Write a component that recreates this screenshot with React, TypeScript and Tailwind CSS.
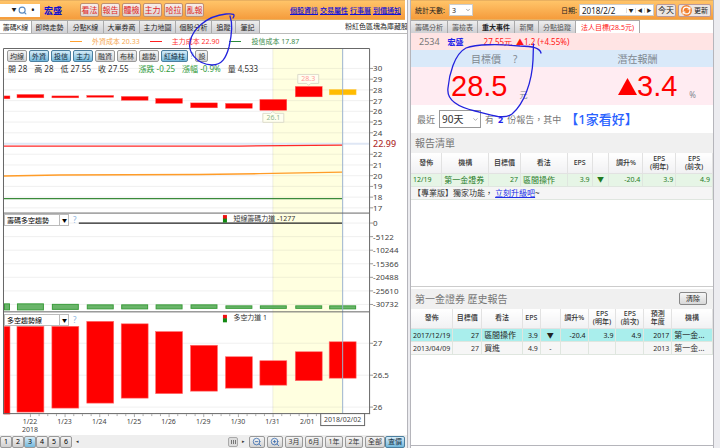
import { useState } from "react";
import type { ReactNode } from "react";
import { ChevronDown, RefreshCw, Search, ZoomIn, ZoomOut } from "lucide-react";
import clsx from "clsx";

const actions = ["看法", "報告", "體檢", "主力", "哈拉", "亂報"];
const links = ["個股資訊", "交易屬性", "行事曆", "到價通知"];
const leftTabs = ["籌碼K線", "即時走勢", "分點K線", "大單券商", "主力地圖", "個股分析", "追蹤", "筆記"];
const rightTabs = ["籌碼分析", "籌檢表", "重大事件", "新聞", "分點追蹤", "法人目標(28.5元)"];

const overlays = [
  { label: "均線", on: false },
  { label: "外資", on: true },
  { label: "投信", on: true },
  { label: "主力", on: true },
  { label: "融資", on: false },
  { label: "布林", on: false },
  { label: "趨勢", on: false },
  { label: "紅綠柱", on: true },
];

const legend = [
  { label: "外資成本 20.33", line: "bg-[#ffa030]", text: "text-[#f5a850]" },
  { label: "主力成本 22.90", line: "bg-[#ff2020]", text: "text-[#ff3030]" },
  { label: "投信成本 17.87", line: "bg-[#2a8a3a]", text: "text-[#3a8a4a]" },
];

// x, width, candle top/bottom, volume top/bottom, trend top/bottom
const bars = [
  [4, 6, 96, 99, 304, 311, 327, 415],
  [17, 27, 94.5, 98, 304, 311, 327, 413],
  [52, 27, 96, 98, 304.5, 310.5, 327, 409],
  [87, 27, 95.5, 97.5, 305, 310, 322, 404],
  [121.5, 27, 96.5, 100.5, 305, 310, 324.5, 399],
  [156, 27, 98.5, 103.5, 305, 310, 332.3, 394.5],
  [191, 27, 103, 108, 305, 309.5, 346, 392],
  [226, 27, 103.5, 108.5, 306, 309.5, 357.5, 389],
  [260.5, 27, 99.5, 110.5, 306, 309.5, 361.5, 386],
  [296, 27, 86.5, 97, 306, 309.5, 352.5, 381.5],
  [330, 27, 89.5, 95, 306, 310, 342.5, 379],
];

const priceTicks = [30, 29, 28, 27, 26, 25, 24, 22, 21, 20, 19, 18, 17].map((v) => ({
  label: String(v),
  y: 68.5 + (30 - v) * 10.75,
}));
const volumeTicks = ["0", "-5122", "-10244", "-15366", "-20488", "-25610", "-30732"].map((label, i) => ({
  label,
  y: 223.5 + i * 13.6,
}));
const trendTicks = [
  { label: "27", y: 344 },
  { label: "26.5", y: 376 },
  { label: "26", y: 408 },
];
const ticks = [...priceTicks, ...volumeTicks, ...trendTicks];

const dates = ["1/22", "1/23", "1/24", "1/25", "1/26", "1/29", "1/30", "1/31", "2/01"];

const history = [
  ["2017/12/19", "27", "區間操作", "3.9", "▼", "-20.4", "3.9", "4.9", "2017", "第一金…"],
  ["2013/04/09", "27", "買進", "4.9", "-", "", "", "", "2013", "第一金…"],
];

const SmallButton = ({ children, on, label }: { children: ReactNode; on?: boolean; label?: string }) => (
  <button
    type="button"
    aria-label={label}
    className={clsx(
      "flex h-3 items-center justify-center rounded-xs border px-0.5 text-[7px] leading-none whitespace-nowrap",
      on
        ? "border-[#4c7f9f] bg-linear-to-b from-[#d5ecf8] to-[#72b8dc] text-[#102a3a]"
        : "border-[#999] bg-linear-to-b from-[#f6f6f6] to-[#d2d2d2] text-[#333]"
    )}
  >
    {children}
  </button>
);

const Tab = ({ label, active, className }: { label: string; active?: boolean; className?: string }) => (
  <button
    type="button"
    className={clsx(
      "h-[13px] border-t border-r border-[#aaa] text-[7px] leading-none whitespace-nowrap",
      active ? "bg-white" : "bg-linear-to-b from-[#eeeeee] to-[#cfcfd3]",
      className
    )}
  >
    {label}
  </button>
);

const Chart = () => (
  <svg viewBox="0 48 408 387" className="block w-full" fontSize="7" fill="#444">
    <rect x="273.5" y="48" width="70" height="366" fill="#ffffe0" />
    {ticks.map((t) => (
      <g key={t.label}>
        <path d={`M4 ${t.y}H370`} stroke="#888" strokeOpacity="0.13" />
        <path d={`M371 ${t.y}h3`} stroke="#999" />
        <text x="374" y={t.y + 3} fontSize="8">{t.label}</text>
      </g>
    ))}
    <path d="M4 144H370" stroke="#dfe7f5" strokeWidth="2" />
    <text x="374" y="147" fontSize="9" fontWeight="500" fill="#b03030">22.99</text>
    <path d="M273.5 48V414" stroke="#888" strokeOpacity="0.15" />

    {bars.map(([x, w, top, bottom, vTop, vBottom, tTop, tBottom], i) => (
      <g key={x}>
        <rect x={x} y={top} width={w} height={bottom - top} fill={i === 10 ? "#ffbc00" : "#ff0000"} stroke={i === 10 ? "#ffcf60" : "#ff7070"} strokeWidth="0.4" />
        <rect x={x + 0.5} y={vTop + 0.5} width={w - 1} height={vBottom - vTop - 1} fill="#6ab56a" stroke="#3a9c3a" />
        <rect x={x} y={tTop} width={w} height={tBottom - tTop} fill="#ff0000" stroke="#ff7070" strokeWidth="0.6" />
      </g>
    ))}

    <path d="M4 146.3H240L343 145.3" stroke="#ff2828" strokeWidth="1.3" fill="none" />
    <path d="M4 176.3L60 175.3L200 174.8L260 174L343 172.5" stroke="#ff9c28" strokeWidth="1.3" fill="none" />
    <path d="M4 199H343" stroke="#3a8a3a" strokeWidth="1.3" />
    <path d="M79 223.5H343" stroke="#222" strokeWidth="1.2" />
    <path d="M343.5 49V414" stroke="#9db3cf" />

    <path d="M298.5 74.5h21v9h-8l-2 2-2-2h-9z" fill="#fffef0" stroke="#dddccb" />
    <text x="309" y="81.5" textAnchor="middle" fill="#ff9a9a">28.3</text>
    <path d="M263.5 113.5h8l2-2 2 2h9v9h-21z" fill="#fffff0" stroke="#dddccb" />
    <text x="274" y="120.5" textAnchor="middle" fill="#8fb88f">26.1</text>

    <path d="M3.5 415V48.5H370.5V415M3 213.5H370M3 312.5H370M3 414.5H371" stroke="#666" fill="none" />
    {dates.map((d, i) => (
      <g key={d}>
        <path d={`M${30.5 + i * 34.75} 415v3m8.7 -3v2m8.7 -2v2m8.7 -2v2`} stroke="#aaa" fill="none" />
        <text x={30 + i * 34.75} y="424.5" textAnchor="middle">{d}</text>
      </g>
    ))}
    <text x="30" y="432.5" textAnchor="middle">2018</text>
    <rect x="321.5" y="414.5" width="44" height="12" fill="#fff" stroke="#666" />
    <text x="343.5" y="423" textAnchor="middle">2018/02/02</text>

    {[215, 315].map((y) => (
      <g key={y}>
        <rect x="223.5" y={y + 0.5} width="4" height="4" fill="#ee1111" />
        <rect x="223.5" y={y + 4} width="4" height="4" fill="#118811" />
      </g>
    ))}
    <text x="234" y="221" fill="#333">短線籌碼力道 -1277</text>
    <text x="234" y="321" fill="#333">多空力道 1</text>
  </svg>
);

const SeriesSelect = ({ label, className }: { label: string; className: string }) => (
  <div className={clsx("absolute left-1 flex items-center gap-1 text-[7px] leading-none", className)}>
    <div className="relative">
      <select aria-label={label} className="block h-3 w-[65px] appearance-none border border-[#bbb] bg-white pl-0.5">
        <option>{label}</option>
      </select>
      <span className="pointer-events-none absolute inset-y-0 right-0 flex w-2.5 items-center justify-center border-l border-[#bbb] text-[5px]">▼</span>
    </div>
    <span className="text-[8px] text-[#8ab4e0]">?</span>
  </div>
);

const LeftPanel = () => (
  <section className="flex min-w-0 flex-col border-r border-[#b5b5bb] bg-white">
    <header className="mr-0.5 flex h-5 items-center border-y border-[#e9b060] bg-linear-to-b from-[#ffc468] to-[#f59c3c]">
      <div className="flex h-[13px] w-10 items-center bg-white text-[#222]">
        <input aria-label="股票代號" className="h-full w-2.5 min-w-0" />
        <span className="w-2 text-center text-[5px]">▼</span>
        <button type="button" aria-label="搜尋" className="text-[#5a8ac0]">
          <Search size={9} strokeWidth={3} />
        </button>
        <span className="ml-1 text-[10px] leading-none">•</span>
      </div>
      <strong className="ml-1 text-[9px] leading-none text-[#1010d0]">宏盛</strong>
      <div className="ml-[18px] flex gap-0.5">
        {actions.map((a) => (
          <button key={a} type="button" className="h-3.5 w-[19px] rounded-xs border border-[#c09070] bg-linear-to-b from-[#f8eeea] to-[#dcd2d0] text-[8px] leading-none whitespace-nowrap text-[#e02828]">
            {a}
          </button>
        ))}
      </div>
      <nav className="mr-1 ml-auto flex gap-0.5 text-[7px] leading-none font-medium whitespace-nowrap text-[#1010d8] underline">
        {links.map((l) => (
          <a key={l} href="#">{l}</a>
        ))}
      </nav>
    </header>

    <div className="flex h-3.5 items-end overflow-hidden border-b border-[#bbb] text-[#222]">
      {leftTabs.map((t, i) => (
        <Tab key={t} label={t} active={i === 0} className={i === 0 ? "w-8" : i < 6 ? "w-9" : "w-6"} />
      ))}
      <span className="ml-auto w-[62px] overflow-hidden pb-0.5 text-[7px] leading-[9px] whitespace-nowrap">粉紅色區塊為庫藏股</span>
    </div>

    <div className="flex h-3.5 items-center gap-2.5 pl-[70px] text-[7px] leading-none">
      {legend.map((l) => (
        <span key={l.label} className="flex items-center gap-2.5">
          <i className={clsx("h-px w-3", l.line)} />
          <span className={l.text}>{l.label}</span>
        </span>
      ))}
    </div>

    <div className="relative">
      <Chart />
      <div className="absolute top-0.5 left-[7px] flex gap-0.5">
        {overlays.map((o) => (
          <SmallButton key={o.label} on={o.on}>{o.label}</SmallButton>
        ))}
        <span className="text-[8px] leading-3 text-[#8ab4e0]">?</span>
        <SmallButton>設</SmallButton>
      </div>
      <div className="absolute top-[15px] left-2 flex gap-2.5 text-[8px] leading-3 whitespace-nowrap text-[#333]">
        <div className="flex gap-[7px]">
          <span>開 28</span>
          <span>高 28</span>
          <span>低 27.55</span>
          <span>收 27.55</span>
        </div>
        <div className="flex gap-[7px]">
          <span className="text-[#2f9a3a]">漲跌 -0.25</span>
          <span className="text-[#2f9a3a]">漲幅 -0.9%</span>
          <span>量 4,533</span>
        </div>
      </div>
      <SeriesSelect label="籌碼多空趨勢" className="top-[43%]" />
      <SeriesSelect label="多空趨勢線" className="top-[69%]" />
    </div>

    <footer className="mt-auto flex h-[13px] items-center gap-0.5 bg-[#eee] pr-1">
      <div className="flex">
        {["1", "2", "3", "4", "5", "6"].map((n) => (
          <button
            key={n}
            type="button"
            className={clsx(
              "h-3 w-3 rounded-xs border border-[#999] text-[7px] leading-none",
              n === "3" ? "bg-linear-to-b from-[#d5ecf8] to-[#72b8dc]" : "bg-linear-to-b from-[#f4f4f4] to-[#d0d0d0]"
            )}
          >
            {n}
          </button>
        ))}
      </div>
      <div className="flex flex-1 items-center justify-between px-0.5 text-[5px] text-[#333]">
        <span>◂</span>
        <span className="flex items-center gap-1">
          <span className="flex h-2.5 w-2.5 items-center justify-center gap-px rounded-xs border border-[#aaa] bg-[#ddd]">
            <i className="h-1 w-px bg-[#777]" />
            <i className="h-1 w-px bg-[#777]" />
            <i className="h-1 w-px bg-[#777]" />
          </span>
          <span>▸</span>
        </span>
      </div>
      <SmallButton label="縮小"><ZoomOut size={10} className="text-[#3f6fb0]" /></SmallButton>
      <SmallButton label="放大"><ZoomIn size={10} className="text-[#3f6fb0]" /></SmallButton>
      {["3月", "6月", "1年", "2年", "全部", "查價"].map((r) => (
        <div key={r} className="grid w-[18px]">
          <SmallButton on={r === "查價"}>{r}</SmallButton>
        </div>
      ))}
    </footer>
  </section>
);

const head = "border-r border-b border-[#e2e2e2] bg-linear-to-b from-white to-[#f1f1f3] text-[7px] leading-[8px] font-medium text-[#333]";
const cell = "overflow-hidden border-r border-b border-[#dfe6df] px-0.5 text-[7px] leading-none whitespace-nowrap";

const ReportTable = () => (
  <table className="w-full table-fixed border-collapse">
    <colgroup>
      {[31, 47, 32, 47, 25, 17, 34, 33, 37].map((w, i) => (
        <col key={i} style={{ width: `${w / 3.03}%` }} />
      ))}
    </colgroup>
    <thead>
      <tr className="h-5">
        {["發佈", "機構", "目標價", "看法", "EPS", "", "調升%"].map((h, i) => (
          <th key={i} className={head}>{h}</th>
        ))}
        <th className={head}>EPS<br />(明年)</th>
        <th className={head}>EPS<br />(前次)</th>
      </tr>
    </thead>
    <tbody>
      <tr className="h-[13px] bg-[#e6f5e6] text-[#1f7a1f]">
        <td className={cell}>12/19</td>
        <td className={cell}><span className="text-[8px]">第一金證券</span></td>
        <td className={clsx(cell, "text-right")}>27</td>
        <td className={cell}><span className="text-[8px]">區間操作</span></td>
        <td className={clsx(cell, "text-right")}>3.9</td>
        <td className={clsx(cell, "text-center")}>▼</td>
        <td className={clsx(cell, "text-right")}>-20.4</td>
        <td className={clsx(cell, "text-right")}>3.9</td>
        <td className={clsx(cell, "text-right")}>4.9</td>
      </tr>
      <tr className="h-[13px] bg-[#f5f5f5] text-[#333]">
        <td colSpan={9} className={cell}>
          <span className="text-[8px]">
            【專業版】獨家功能， <a href="#" className="text-[#2030e8] underline">立刻升級吧</a>~
          </span>
        </td>
      </tr>
    </tbody>
  </table>
);

const HistoryTable = () => (
  <table className="w-full table-fixed border-collapse text-[#333]">
    <colgroup>
      {[42, 29, 41, 18, 20, 28, 28, 28, 28, 41].map((w, i) => (
        <col key={i} style={{ width: `${w / 3.03}%` }} />
      ))}
    </colgroup>
    <thead>
      <tr className="h-5">
        {["發佈", "目標價", "看法", "EPS", "", "調升%"].map((h, i) => (
          <th key={i} className={head}>{h}</th>
        ))}
        <th className={head}>EPS<br />(明年)</th>
        <th className={head}>EPS<br />(前次)</th>
        <th className={head}>預測<br />年度</th>
        <th className={head}>機構</th>
      </tr>
    </thead>
    <tbody>
      {history.map((row, r) => (
        <tr key={row[0]} className={clsx("h-[13px]", r === 0 ? "bg-[#a9eeec] text-[#222]" : "bg-[#f6f6f6]")}>
          {row.map((v, i) => (
            <td key={i} className={clsx(cell, i !== 0 && i !== 2 && i !== 9 && (i === 4 ? "text-center" : "text-right"))}>
              {i === 2 || i === 9 ? <span className="text-[8px]">{v}</span> : v}
            </td>
          ))}
        </tr>
      ))}
    </tbody>
  </table>
);

const RightPanel = () => {
  const [date, setDate] = useState("2018/2/2");

  return (
    <section className="mr-1.5 ml-0.5 flex min-w-0 flex-col border-x border-[#b5b5bb] bg-white">
      <header className="flex h-5 items-center gap-0.5 border-y border-[#e9b060] bg-linear-to-b from-[#ffc468] to-[#f59c3c] px-0.5 text-[7px] leading-none whitespace-nowrap text-[#222]">
        <label htmlFor="days" className="ml-0.5 w-8">統計天數:</label>
        <div className="relative">
          <select id="days" className="block h-3 w-6 appearance-none border border-[#ccc] bg-white pl-0.5">
            <option>3</option>
          </select>
          <ChevronDown size={6} className="pointer-events-none absolute top-[3px] right-0.5 text-[#555]" />
        </div>
        <label htmlFor="date" className="ml-auto">日期:</label>
        <div className="flex h-3 items-center border border-[#ccc] bg-white text-[5px]">
          <input id="date" value={date} onChange={(e) => setDate(e.target.value)} className="w-[46px] pl-0.5 text-[8px] leading-none" />
          <button type="button" aria-label="選擇日期" className="w-[9px] border-l border-[#ddd]">▼</button>
          <button type="button" aria-label="前一天" className="w-[9px] border-l border-[#ddd]">◀</button>
          <button type="button" aria-label="後一天" className="w-[9px] border-l border-[#ddd]">▶</button>
        </div>
        <button type="button" className="h-[13px] rounded-xs border border-[#b99] bg-[#ece6e2] px-px text-[8px]">今天</button>
        <button type="button" className="flex h-[13px] items-center gap-0.5 rounded-xs border border-[#b99] bg-[#ece6e2] px-0.5 text-[7px]">
          <span className="rounded-full bg-[#f08030] p-px text-white"><RefreshCw size={9} strokeWidth={3} /></span>
          更新
        </button>
      </header>

      <div className="flex h-[13px] items-end text-[#555]">
        {rightTabs.map((t, i) => (
          <Tab
            key={t}
            label={t}
            active={i === 5}
            className={clsx(
              i === 5 ? "w-16 text-[#ff2020]" : i === 1 ? "w-[30px]" : i === 3 ? "w-6" : "w-[37px]",
              i === 2 && "font-bold text-[#222]"
            )}
          />
        ))}
      </div>

      <div className="flex h-[17px] items-center gap-2 bg-[#ffe4e4] pl-2 text-[8px] leading-none whitespace-nowrap">
        <span className="text-[9px] text-[#777]">2534</span>
        <strong className="mr-3 text-[#2020e8]">宏盛</strong>
        <span className="flex gap-1 text-[#ff1414]">
          <span>27.55元</span>
          <span>▲1.2 (+4.55%)</span>
        </span>
      </div>

      <div className="grid grid-cols-2 leading-none text-[#808890]">
        <div className="flex h-[17px] items-center gap-3 bg-[#d9e9f9] pl-[60px] text-[10px]">
          目標價 <span>?</span>
        </div>
        <div className="flex h-[17px] items-center justify-center bg-[#d9e9f9] text-[10px]">潛在報酬</div>
        <div className="flex h-[38px] items-center gap-3 bg-[#ffecf2] pl-10 text-[8px]">
          <span className="font-['Liberation_Sans'] text-[29px] text-[#ff0000]">28.5</span>
          <span className="self-end pb-1.5">元</span>
        </div>
        <div className="flex h-[38px] items-center gap-3 bg-[#ffecf2] pl-14 text-[8px]">
          <span className="flex items-center font-['Liberation_Sans'] text-[29px] text-[#ff0000]">
            <svg width="19" height="17" viewBox="0 0 19 17" fill="currentColor"><path d="M9.5 0L19 17H0z" /></svg>
            3.4
          </span>
          <span className="self-end pb-1.5">%</span>
        </div>
      </div>

      <div className="flex h-7 items-center gap-1 pl-1.5 text-[9px] leading-none whitespace-nowrap text-[#777]">
        <label htmlFor="range">最近</label>
        <div className="relative">
          <select id="range" className="block h-[18px] w-[42px] appearance-none border border-[#999] bg-white pl-0.5 text-[10px] text-[#333]">
            <option>90天</option>
          </select>
          <ChevronDown size={7} className="pointer-events-none absolute top-1.5 right-0.5" />
        </div>
        <span>有</span>
        <strong className="text-[#2020e8]">2</strong>
        <span>份報告，其中</span>
        <strong className="text-[13px] font-medium text-[#2a62ff]">【1家看好】</strong>
      </div>

      <h2 className="flex h-5 items-center bg-[#f0f0f0] pl-1 text-[10px] leading-none text-[#777]">報告清單</h2>
      <ReportTable />
      <div className="h-[87px] border-b border-[#ccc]" />

      <div className="mt-0.5 flex h-5 items-center justify-between bg-[#f0f0f0] pr-1.5 pl-1">
        <h2 className="text-[10px] leading-none text-[#777]">第一金證券 歷史報告</h2>
        <button type="button" className="h-[13px] w-7 rounded-xs border border-[#888] bg-linear-to-b from-[#f6f6f6] to-[#d8d8d8] text-[7px] leading-none text-[#222]">清除</button>
      </div>
      <HistoryTable />
      <div className="mb-0.5 flex-1 border-b border-[#b5b5bb]" />
    </section>
  );
};

export default function App() {
  return (
    <main className="relative grid min-h-screen grid-cols-[408fr_312fr] overflow-hidden bg-[#ececf0] font-['Noto_Sans','Noto_Sans_CJK_TC',sans-serif]">
      <LeftPanel />
      <RightPanel />

      {/* Pen marks */}
      <svg viewBox="0 0 720 448" className="pointer-events-none absolute inset-x-0 top-0 w-full" fill="none" stroke="#2222dd" strokeWidth="1.3" strokeLinecap="round">
        <path d="M233 18C236 13 232 14 226 14C206 16 192 30 190 42C188 52 196 64 212 65C222 65 226 58 229 47C232 34 233 24 230 16" />
        <path d="M541 53C540 48 531 46 520 46C500 44 476 44 466 48C454 54 449 76 448 88C446 102 462 108 475 111C490 115 504 120 512 114C524 104 532 82 533 60L533.5 44" />
      </svg>
    </main>
  );
}
